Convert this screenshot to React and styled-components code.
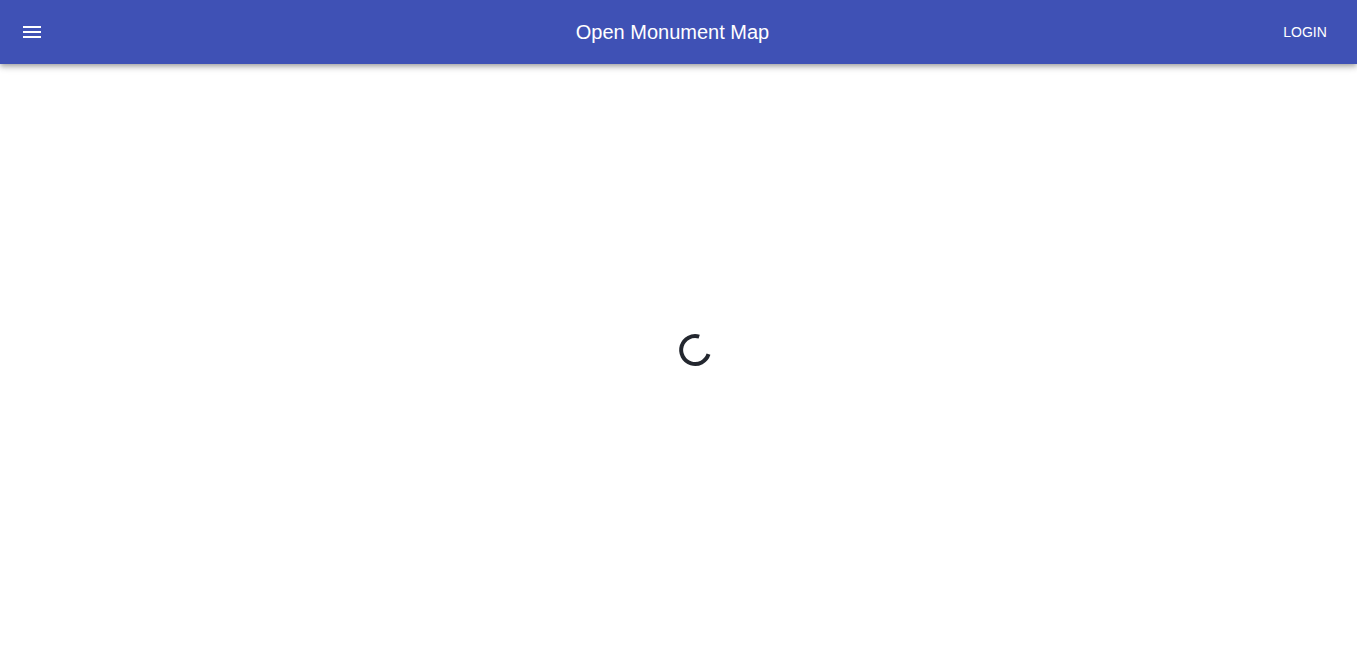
import React from 'react';
import styled, { createGlobalStyle } from 'styled-components';

const GlobalStyle = createGlobalStyle`
  *, *::before, *::after { box-sizing: border-box; }
  body {
    margin: 0;
    background: #fff;
    font-family: "Liberation Sans", Arial, sans-serif;
  }
`;

const Page = styled.div`
  display: flex;
  flex-direction: column;
  min-height: 100vh;
`;

const AppBar = styled.header`
  display: flex;
  align-items: center;
  gap: 16px;
  min-height: 64px;
  padding: 0 20px 0 8px;
  color: #fff;
  background: #3f51b5;
  box-shadow:
    0 2px 4px -1px rgba(0, 0, 0, 0.2),
    0 4px 5px 0 rgba(0, 0, 0, 0.14),
    0 1px 10px 0 rgba(0, 0, 0, 0.12);
`;

const IconButton = styled.button`
  display: flex;
  padding: 12px;
  border: 0;
  border-radius: 50%;
  color: inherit;
  background: transparent;
  cursor: pointer;
`;

const Title = styled.h1`
  flex: 1;
  margin: 0;
  padding-left: 16px;
  font-size: 20px;
  font-weight: 400;
  line-height: 32px;
  text-align: center;
`;

const TextButton = styled.button`
  min-width: 64px;
  padding: 6px 8px;
  border: 0;
  border-radius: 4px;
  color: inherit;
  background: transparent;
  font-family: inherit;
  font-size: 14px;
  line-height: 24px;
  text-transform: uppercase;
  cursor: pointer;
`;

const Content = styled.main`
  display: flex;
  flex: 1;
  align-items: center;
  justify-content: center;
  padding: 0 0 30px 32px;
`;

const Spinner = styled.svg`
  display: block;
  width: 36px;
  height: 36px;
  color: #23272f;
`;

function MenuIcon() {
  return (
    <svg width="24" height="24" viewBox="0 0 24 24" fill="currentColor" aria-hidden="true">
      <path d="M3 18h18v-2H3v2zm0-5h18v-2H3v2zm0-7v2h18V6H3z" />
    </svg>
  );
}

export default function App() {
  return (
    <Page>
      <GlobalStyle />
      <AppBar>
        <IconButton type="button" aria-label="Open menu">
          <MenuIcon />
        </IconButton>
        <Title>Open Monument Map</Title>
        <TextButton type="button">Login</TextButton>
      </AppBar>
      <Content>
        <Spinner viewBox="0 0 36 36" role="img" aria-label="Loading">
          <path
            d="M22.2 4.6A14 14 0 1 0 31.5 22.2"
            fill="none"
            stroke="currentColor"
            strokeWidth="4"
          />
        </Spinner>
      </Content>
    </Page>
  );
}
